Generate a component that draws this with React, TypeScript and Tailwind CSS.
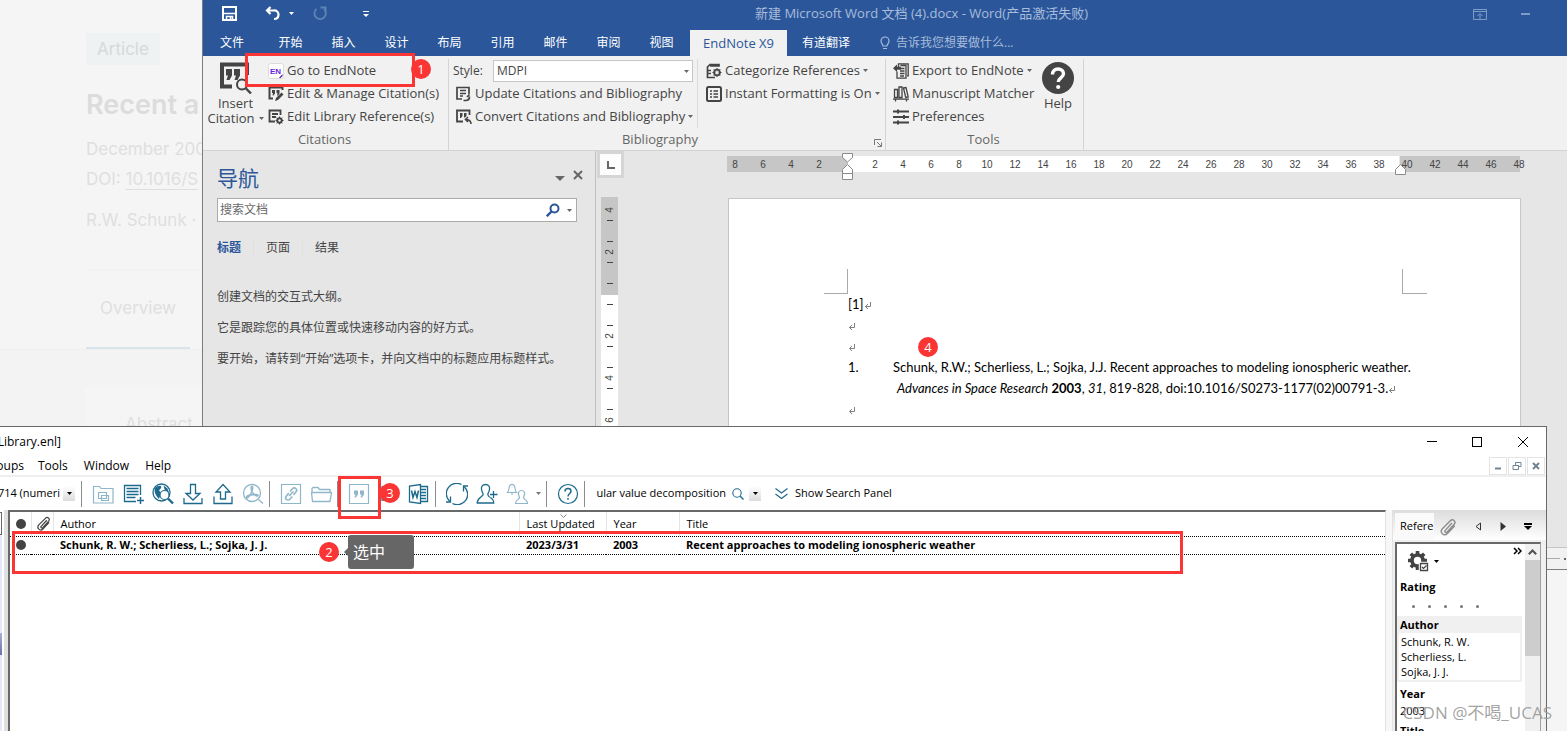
import type { ReactNode } from "react";

const UI = "font-['Open_Sans','Noto_Sans_CJK_SC',sans-serif]";
const DOC = "font-['Lato','Noto_Sans_CJK_SC',sans-serif]";

function Caret({ className = "" }: { className?: string }) {
  return (
    <svg width="5" height="3" viewBox="0 0 5 3" className={`shrink-0 ${className}`} aria-hidden="true">
      <path d="M0 0h5L2.5 3z" fill="currentColor" />
    </svg>
  );
}

function Icon({ size = 16, children, className = "" }: { size?: number; children: ReactNode; className?: string }) {
  return (
    <svg
      width={size}
      height={size}
      viewBox={`0 0 ${size} ${size}`}
      fill="none"
      stroke="currentColor"
      className={`shrink-0 ${className}`}
      aria-hidden="true"
    >
      {children}
    </svg>
  );
}

/* ---------- Article page behind the windows ---------- */

function ArticlePage() {
  return (
    <main className="flex h-full w-[202px] flex-col overflow-hidden bg-[#f5f5f5] font-['Inter',sans-serif] text-[17px] whitespace-nowrap text-[#dfdfdf]">
      <div className="ml-[86px] pt-[33px]">
        <span className="inline-block h-8 w-[74px] bg-[#eef2f3] text-center leading-8 text-[#d6d9da]">Article</span>
        <h1 className="mt-[20px] text-[27px] leading-[40px] font-semibold text-[#dcdcdc]">Recent a</h1>
        <p className="mt-[9px] leading-[30px]">December 200</p>
        <p className="leading-[30px]">
          DOI:{" "}
          <a href="#doi" className="underline underline-offset-4">
            10.1016/S
          </a>
        </p>
        <p className="mt-[11px] leading-[30px]">R.W. Schunk ·</p>
        <div className="mt-[34px] border-t border-[#f0f0f0]">
          <a href="#overview" className="flex h-[79px] w-[104px] items-center justify-center border-b-2 border-[#d9e3ea]">
            Overview
          </a>
        </div>
      </div>
      <div className="grow border-t border-[#efefef] bg-[#f3f3f3] pt-[38px] pl-[85px]">
        <h2 className="h-40 bg-[#f5f5f5] pt-[24px] pl-[40px]">Abstract</h2>
      </div>
    </main>
  );
}

/* ---------- Word ---------- */

function TitleBar() {
  return (
    <header className="flex h-[27px] items-center text-white">
      <button aria-label="保存" className="ml-[19px]">
        <Icon size={15}>
          <path d="M1 1h13v13H1z" strokeWidth="2" />
          <path d="M2 7.500h11M4.500 14v-3.500h6V14M8.500 11v3" strokeWidth="1.500" />
        </Icon>
      </button>
      <button aria-label="撤消" className="ml-[28px]">
        <Icon size={16}>
          <path d="M5.500 1L2 4.500l3.500 3.500M2 4.500h7a4 4 0 0 1 4.500 4c0 3-2 4.500-4.500 4.500" strokeWidth="2.200" />
        </Icon>
      </button>
      <Caret className="ml-[8px]" />
      <button aria-label="重复" className="ml-[19px] text-[#5f82b7]">
        <Icon size={15}>
          <path d="M3.500 3A5.700 5.700 0 1 0 11 3.200M7.500 1.500h5V6.500" strokeWidth="1.800" />
        </Icon>
      </button>
      <button aria-label="自定义" className="ml-[35px]">
        <Icon size={6}>
          <path d="M0 .5h6" />
          <path d="M0 3h6L3 6z" fill="currentColor" stroke="none" />
        </Icon>
      </button>
      <h1 className="ml-[386px] text-[13px] whitespace-nowrap text-[#a9bcdb]">新建 Microsoft Word 文档 (4).docx - Word(产品激活失败)</h1>
      <button aria-label="功能区显示选项" className="ml-auto text-[#7f9bc8]">
        <Icon size={14}>
          <path d="M.5 2.500h13v10H.5zM.5 4.500h13M7 12V7M4.500 9L7 6.500 9.500 9" />
        </Icon>
      </button>
      <button aria-label="最小化" className="mr-[37px] ml-[34px] h-[2px] w-[9px] bg-[#7f9bc8]" />
    </header>
  );
}

const TABS = ["开始", "插入", "设计", "布局", "引用", "邮件", "审阅", "视图"];

function TabStrip() {
  return (
    <nav className="flex h-[29px] items-end text-xs text-white">
      <button className="h-[27px] w-[58px]">文件</button>
      <span className="ml-[3px] flex">
        {TABS.map((t) => (
          <button key={t} className="h-[27px] w-[53px]">
            {t}
          </button>
        ))}
      </span>
      <button className="ml-[2px] h-[26px] w-[97px] bg-[#f1f1f1] text-[13px] leading-[20px] text-[#2b579a]">EndNote X9</button>
      <button className="ml-[4px] h-[27px] w-[70px]">有道翻译</button>
      <button className="ml-[18px] flex h-[26px] items-center gap-[5px] text-[#a9bcdb]">
        <Icon size={14} className="-mx-px">
          <path d="M5 10c0-2-2-2.500-2-5a4 4 0 0 1 8 0c0 2.500-2 3-2 5zM5 12.500h4" strokeWidth="1.200" />
        </Icon>
        告诉我您想要做什么...
      </button>
    </nav>
  );
}

function Cmd({ icon, label, menu }: { icon: ReactNode; label: string; menu?: boolean }) {
  return (
    <button className="flex h-[23px] items-center gap-[3px] whitespace-nowrap">
      {icon}
      {label}
      {menu && <Caret className="text-[#666666]" />}
    </button>
  );
}

function GroupLabel({ children }: { children: ReactNode }) {
  return <div className="h-[22px] pr-[2px] text-center leading-[22px] text-[#666666]">{children}</div>;
}

const iconEndNote = (
  <svg width="16" height="16" viewBox="0 0 16 16" className="shrink-0" aria-hidden="true">
    <rect x=".5" y=".5" width="15" height="15" rx="2" fill="#fff" stroke="#dcdcdc" />
    <text x="2" y="10.500" fontSize="8" fontWeight="700" fontFamily="Liberation Sans, sans-serif" fill="#6a1ee6">
      EN
    </text>
    <path d="M11 15l3.500-4v2l-2 2z" fill="#4a148c" />
  </svg>
);
const iconEditCite = (
  <Icon>
    <path d="M5 12.500H1.500v-11h13V4" strokeWidth="2" />
    <path d="M4 4h3v3.500L5.500 9.500H4.500L5 7H4zM8.500 4h3v3.500L10 9.500H9L9.500 7h-1z" fill="currentColor" stroke="none" />
    <path d="M7 15l1-3 5.500-5.500 2 2L10 14z" fill="currentColor" stroke="none" />
  </Icon>
);
const iconEditLib = (
  <Icon>
    <path d="M7 12.500H1.500v-11h11V6M4 5h6M4 8h4" strokeWidth="1.800" />
    <circle cx="11.500" cy="11.500" r="2.400" strokeWidth="1.600" />
    <path d="M11.500 7.500v8M7.500 11.500h8M8.700 8.700l5.600 5.600M14.300 8.700l-5.600 5.600" strokeWidth="1" />
    <circle cx="11.500" cy="11.500" r="1.200" fill="#f1f1f1" stroke="none" />
  </Icon>
);
const iconUpdate = (
  <Icon>
    <path d="M6 13H1V1.500h12V8M4 4.500h6M4 7.500h6M4 10h3" strokeWidth="1.700" />
    <path d="M7.500 14.500h2c2.500 0 4-1.500 4-4M11 11l2.500-2.500" strokeWidth="1.700" />
  </Icon>
);
const iconConvert = (
  <Icon>
    <path d="M7 12.500H1v-11h12.500V6" strokeWidth="1.800" />
    <path d="M4 4h2.500v3L5 9H4zM8 4h2.500v3L9 8.500H8z" fill="currentColor" stroke="none" />
    <path d="M15 15c0-3-1.500-4.500-5.500-4.500M12 8l-2.500 2.500L12 13" strokeWidth="1.600" />
  </Icon>
);
const iconCategorize = (
  <Icon>
    <path d="M1.500 4.500v10H9M5 3h8V1.500H5zM4.500 1L1 4.500M1.500 7.500H5M1.500 10.500H5" strokeWidth="1.700" />
    <circle cx="11" cy="9.500" r="3" strokeWidth="1.600" />
    <path d="M11 5v9M6.500 9.500h9M7.800 6.300l6.400 6.400M14.200 6.300l-6.400 6.400" strokeWidth="1" />
    <circle cx="11" cy="9.500" r="1.600" fill="#f1f1f1" stroke="none" />
  </Icon>
);
const iconInstant = (
  <Icon>
    <rect x="1" y="1" width="14" height="14" rx="1.500" strokeWidth="2" />
    <path d="M4 5h2M4 8h2M4 11h2M7.500 5H12M7.500 8H12M7.500 11H12" strokeWidth="1.700" />
  </Icon>
);
const iconExport = (
  <Icon>
    <path d="M5.500 5V.8h9.700v12H14M4 8.500v6.700h9V2.500H7.500M8 5.500h3.500M7 8h4.500M7 10.500h4.500M7 13h4" strokeWidth="1.300" />
    <path d="M0 5.200l4-3.700v2.200h4v3H4v2.200z" fill="currentColor" stroke="none" />
  </Icon>
);
const iconBooks = (
  <Icon>
    <path d="M1.500 3.500h3v8h-3zM6 1h3v10.500H6zM10.500 2l2.500-.5 2.200 9.500-2.500.5zM0 13.200h16M2.500 13v2.500M13.500 13v2.500" strokeWidth="1.300" />
  </Icon>
);
const iconPrefs = (
  <Icon>
    <path d="M0 2.500h16M0 8h16M0 13.500h16" strokeWidth="1.800" />
    <path d="M5 .5v4M11 6v4M5 11.500v4" strokeWidth="2" />
  </Icon>
);

function Ribbon() {
  return (
    <section className="flex h-[95px] border-b border-[#d2d2d2] bg-[#f1f1f1] pt-[3px] text-[13px] text-[#444444]">
      <div className="w-[245px]">
        <div className="flex h-[69px]">
          <button className="flex w-[65px] flex-col items-center pt-[3px] leading-[15px]">
            <Icon size={32} className="mb-[2px]">
              <path d="M12 24.500H2v-22h25V13" strokeWidth="4" />
              <path d="M6 7h6v6.500L9.500 18H6.500L8 13.500H6zM14 7h6v6.500L17.500 18h-3L16 13.500h-2z" fill="currentColor" stroke="none" />
              <circle cx="22" cy="22.500" r="5" fill="#f1f1f1" strokeWidth="2" />
              <path d="M26 26.500l5 5" strokeWidth="2.400" />
            </Icon>
            <span>Insert</span>
            <span className="flex items-center gap-[4px]">
              Citation <Caret className="text-[#666666]" />
            </span>
          </button>
          <div>
            <Cmd icon={iconEndNote} label="Go to EndNote" />
            <Cmd icon={iconEditCite} label="Edit & Manage Citation(s)" />
            <Cmd icon={iconEditLib} label="Edit Library Reference(s)" />
          </div>
        </div>
        <GroupLabel>Citations</GroupLabel>
      </div>

      <div className="relative w-[438px] border-x border-[#d4d4d4]">
        <div className="flex h-[69px]">
          <div className="w-[249px] border-r border-[#dcdcdc]">
            <div className="flex h-[23px] items-center pl-[4px]">
              <label htmlFor="style" className="w-[40px] text-xs">
                Style:
              </label>
              <span className="relative flex">
                <select id="style" className="h-[22px] w-[200px] appearance-none border border-[#c6c6c6] bg-white px-[3px] text-xs">
                  <option>MDPI</option>
                </select>
                <Caret className="pointer-events-none absolute top-[10px] right-[4px] text-[#666666]" />
              </span>
            </div>
            <div className="pl-[7px]">
              <Cmd icon={iconUpdate} label="Update Citations and Bibliography" />
              <Cmd icon={iconConvert} label="Convert Citations and Bibliography" menu />
            </div>
          </div>
          <div className="pl-[8px]">
            <Cmd icon={iconCategorize} label="Categorize References" menu />
            <Cmd icon={iconInstant} label="Instant Formatting is On" menu />
          </div>
        </div>
        <div className="pr-[12px]">
          <GroupLabel>Bibliography</GroupLabel>
        </div>
        <button aria-label="Bibliography settings" className="absolute right-[3px] bottom-[3px] text-[#777777]">
          <Icon size={8}>
            <path d="M.5 6V.5H7M3 3l4 4M7.500 3.500v4h-4" />
          </Icon>
        </button>
      </div>

      <div className="w-[198px] border-r border-[#d4d4d4]">
        <div className="flex h-[69px] justify-between pr-[9px] pl-[7px]">
          <div>
            <Cmd icon={iconExport} label="Export to EndNote" menu />
            <Cmd icon={iconBooks} label="Manuscript Matcher" />
            <Cmd icon={iconPrefs} label="Preferences" />
          </div>
          <button className="flex flex-col items-center pt-[3px] leading-[15px]">
            <Icon size={32} className="mb-[2px]">
              <circle cx="16" cy="16" r="16" fill="currentColor" stroke="none" />
              <path d="M10.500 12.500c0-3.500 2.300-5.500 5.500-5.500s5.500 2 5.500 4.800c0 4-5.300 4-5.300 8.200" stroke="#fff" strokeWidth="3.400" />
              <circle cx="16.200" cy="25" r="2.100" fill="#fff" stroke="none" />
            </Icon>
            Help
          </button>
        </div>
        <GroupLabel>Tools</GroupLabel>
      </div>
    </section>
  );
}

function NavPane() {
  return (
    <aside className="w-[393px] border-r border-[#c0c0c0] pr-[18px] pl-[14px] text-xs text-[#444444]">
      <div className="flex items-center pt-[11px]">
        <h2 className="grow text-[21px] leading-[32px] text-[#2b579a]">导航</h2>
        <button aria-label="选项" className="mr-[8px] text-[#666666]">
          <svg width="10" height="5" viewBox="0 0 10 5" aria-hidden="true">
            <path d="M0 0h10L5 5z" fill="currentColor" />
          </svg>
        </button>
        <button aria-label="关闭" className="-mr-[6px] mb-[6px] text-[#666666]">
          <Icon size={10}>
            <path d="M1 1l8 8M9 1L1 9" strokeWidth="2" />
          </Icon>
        </button>
      </div>
      <div className="mt-[4px] flex h-[24px] items-center border border-[#ababab] bg-white pr-[4px]">
        <input aria-label="搜索文档" placeholder="搜索文档" className="min-w-0 grow px-[2px] outline-none placeholder:text-[#6a6a6a]" />
        <Icon size={14} className="text-[#2b579a]">
          <circle cx="8.500" cy="5.500" r="4" strokeWidth="2" />
          <path d="M5.500 8.500L.8 13.200" strokeWidth="2.400" />
        </Icon>
        <Caret className="ml-[7px] text-[#666666]" />
      </div>
      <div className="mt-[16px] flex h-[20px] items-center">
        <button className="w-[36px] text-left font-bold text-[#2b579a]">标题</button>
        <button className="w-[50px] border-x border-[#e0e0e0]">页面</button>
        <button className="w-[48px]">结果</button>
      </div>
      <div className="mt-[23px] flex flex-col whitespace-nowrap">
        <p className="h-[31px] leading-[31px]">创建文档的交互式大纲。</p>
        <p className="h-[31px] leading-[31px]">它是跟踪您的具体位置或快速移动内容的好方式。</p>
        <p className="h-[31px] leading-[31px]">要开始，请转到“开始”选项卡，并向文档中的标题应用标题样式。</p>
      </div>
    </aside>
  );
}

const LEFT_NUMS = [8, 6, 4, 2];
const MID_NUMS = Array.from({ length: 19 }, (_, i) => (i + 1) * 2);
const RIGHT_NUMS = [40, 42, 44, 46, 48];

function RulerNums({ nums }: { nums: number[] }) {
  return (
    <>
      {nums.map((n) => (
        <span key={n} className="w-[28px] shrink-0 text-center">
          {n}
        </span>
      ))}
    </>
  );
}

function HorizontalRuler() {
  return (
    <div className="mt-[5px] ml-[103px] flex h-[16px] font-['Liberation_Sans',sans-serif] text-[10px] leading-[17px] text-[#444444]">
      <div className="flex w-[121px] justify-end bg-[#c6c6c6] pr-[15px]">
        <RulerNums nums={LEFT_NUMS} />
      </div>
      <div className="relative flex w-[551px] bg-white pl-[13px]">
        <RulerNums nums={MID_NUMS} />
        <svg width="12" height="30" viewBox="0 0 12 30" className="absolute top-[-4px] left-[-6px]" fill="#fff" stroke="#8a8a8a" aria-hidden="true">
          <path d="M.5 1.500h10v4l-5 4.500-5-4.500zM.5 21.500v-4l5-5 5 5v4zM.5 21.500h10v6H.5z" />
        </svg>
        <svg width="12" height="12" viewBox="0 0 12 12" className="absolute top-[8px] right-[-8px] z-10" fill="#fff" stroke="#8a8a8a" aria-hidden="true">
          <path d="M.5 10.500v-5l5-5 5 5v5z" />
        </svg>
      </div>
      <div className="ml-px flex w-[120px] bg-[#c6c6c6]">
        <span className="-ml-[7px] flex">
          <RulerNums nums={RIGHT_NUMS} />
        </span>
      </div>
    </div>
  );
}

const VERTICAL_NUMS = ["4", "2", "", "2", "4", "6"];

function VerticalRuler() {
  return (
    <div className="h-full w-[17px] overflow-hidden bg-linear-to-b from-[#c6c6c6] from-[98px] to-white to-[98px] font-['Liberation_Sans',sans-serif] text-[10px] leading-[10px] text-[#444444]">
      <div className="-mt-[8px] flex flex-col">
        {VERTICAL_NUMS.map((n, i) => (
          <div key={i} className="flex h-[42px] flex-col items-center justify-between py-[10px]">
            <i className={i === 0 ? "h-px w-[6px]" : "h-px w-[6px] bg-[#444444]"} />
            <span className="-rotate-90">{n}</span>
            <i className="h-px w-[6px] bg-[#444444]" />
          </div>
        ))}
      </div>
    </div>
  );
}

function ReturnMark() {
  return (
    <svg width="8" height="8" viewBox="0 0 8 8" fill="none" stroke="#808080" className="inline-block" aria-hidden="true">
      <path d="M6.500 0v4.500h-5M4 2L1.500 4.500 4 7" />
    </svg>
  );
}

function DocumentPage() {
  return (
    <article className={`w-[793px] border border-[#c6c6c6] bg-white text-[13px] whitespace-nowrap text-black ${DOC}`}>
      <div className="mt-[70px] flex justify-between pr-[93px] pl-[95px]">
        <i className="h-[25px] w-[24px] border-r border-b border-[#aaaaaa]" />
        <i className="h-[25px] w-[25px] border-b border-l border-[#aaaaaa]" />
      </div>
      <div className="pl-[119px] leading-[21px]">
        <p>
          [1]
          <ReturnMark />
        </p>
        <p>
          <ReturnMark />
        </p>
        <p>
          <ReturnMark />
        </p>
        <div className="flex">
          <span className="w-[45px]">1.</span>
          <p>
            Schunk, R.W.; Scherliess, L.; Sojka, J.J. Recent approaches to modeling ionospheric weather.
            <br />
            <span className="pl-[4px]">
              <em>Advances in Space Research</em> <b>2003</b>, <em>31</em>, 819-828, doi:10.1016/S0273-1177(02)00791-3.
            </span>
            <ReturnMark />
          </p>
        </div>
        <p>
          <ReturnMark />
        </p>
      </div>
    </article>
  );
}

function WordWindow() {
  return (
    <section className={`absolute top-0 right-0 left-[202px] flex h-[570px] flex-col overflow-hidden border-l border-[#7d7d7d] bg-[#e6e6e6] ${UI}`}>
      <div className="bg-[#2b579a]">
        <TitleBar />
        <TabStrip />
      </div>
      <Ribbon />
      <div className="flex h-[396px]">
        <NavPane />
        <div className="flex min-w-0 grow flex-col pl-px">
          <div className="flex">
            <button aria-label="制表符" className="flex h-[27px] w-[27px] items-center justify-center border-[3px] border-[#d5d5d5] bg-[#fdfdfd] text-[#666666]">
              <Icon size={8}>
                <path d="M1 0v7h7" strokeWidth="2" />
              </Icon>
            </button>
            <HorizontalRuler />
          </div>
          <div className="mt-[19px] flex grow pl-[4px]">
            <VerticalRuler />
            <div className="flex pt-px pl-[110px]">
              <DocumentPage />
            </div>
          </div>
        </div>
      </div>
      <footer className="flex grow items-center justify-end border-y border-t-[#c6c6c6] border-b-[#7d7d7d] bg-[#f1f1f1]">
        <i className="h-px w-[20px] bg-[#aaaaaa]" />
        <i className="mr-px ml-[4px] size-[2px] bg-[#666666]" />
      </footer>
    </section>
  );
}

/* ---------- EndNote ---------- */

function ToolButton({ label, children, muted }: { label: string; children: ReactNode; muted?: boolean }) {
  return (
    <button aria-label={label} className={`flex w-[30px] shrink-0 justify-center ${muted ? "text-[#8fb6c9]" : "text-[#1d6a8d]"}`}>
      <Icon size={22}>{children}</Icon>
    </button>
  );
}

function Separator() {
  return <i className="mr-[6px] ml-px h-[26px] w-px shrink-0 bg-[#8c8c8c]" />;
}

function Toolbar() {
  return (
    <div className="flex h-[33px] shrink-0 items-center text-[11px] text-black">
      <div className="flex w-[60px] justify-end overflow-hidden whitespace-nowrap">
        <span>714 (numeri</span>
      </div>
      <button aria-label="Choose output style" className="ml-[3px] flex h-[15px] w-[12px] items-center justify-center bg-linear-to-b from-white to-[#dcdcdc]">
        <Caret />
      </button>
      <i className="mr-[6px] ml-[6px] h-[26px] w-px shrink-0 bg-[#8c8c8c]" />
      <ToolButton label="Groups" muted>
        <path d="M1.500 20V3.500h6l1.500 2h12V20zM6.500 9.500h8v6h-8zM9.500 12.500h7v5h-7z" strokeWidth="1.200" />
      </ToolButton>
      <ToolButton label="New reference">
        <path d="M18.500 12V2.500h-16v16H14" strokeWidth="1.300" />
        <path d="M4.500 5.500h12M4.500 8.500h12M4.500 11.500h12M4.500 14.500h9M18.500 14v7M15 17.500h7" strokeWidth="1.500" />
      </ToolButton>
      <ToolButton label="Online search">
        <circle cx="9.500" cy="9.500" r="8.500" strokeWidth="1.300" />
        <path d="M3 5c2-1.500 4-2.500 6-2 1 2-1 3-2 4.500l2 2c-1 3-1 4-2 6.500C5 14 3 11 2.500 8zM11.500 2.500l4 3 1.500 4-4.500-3z" fill="currentColor" stroke="none" />
        <circle cx="12.500" cy="12" r="4.500" fill="#fff" strokeWidth="1.200" />
        <path d="M16 15.500l5 5" strokeWidth="2.400" />
      </ToolButton>
      <ToolButton label="Import">
        <path d="M8.500 1.500h5v9H18l-7 6.500-7-6.500h4.500zM2 15v5.500h18V15" strokeWidth="1.300" />
      </ToolButton>
      <ToolButton label="Export">
        <path d="M8.500 16v-7H4l7-7.500L18 9h-4.500v7zM2 13.500v7h18v-7" strokeWidth="1.300" />
      </ToolButton>
      <ToolButton label="Find full text" muted>
        <circle cx="10" cy="10" r="8.500" strokeWidth="1.300" />
        <path d="M4.500 14.500c-.5-2 5-3 9.500-3 3 0 2.500 2 .5 1.500C11.500 12 9 8 9 5c0-2 2-2 1.800 0C10.500 9 7 14 5.500 15c-.5.300-1 0-1-.5zM16.500 16.500l4.500 4" strokeWidth="1.400" />
      </ToolButton>
      <Separator />
      <ToolButton label="Open link" muted>
        <path d="M1.500 1.500h19v19h-19z" strokeWidth="1.200" />
        <path d="M9 13l4.500-4.500M10 8.500l2.500-2.700a2.300 2.300 0 0 1 3.600 3L13.500 12M12.300 13.500l-2.500 2.700a2.300 2.300 0 0 1-3.600-3L8.800 10" strokeWidth="1.600" />
      </ToolButton>
      <ToolButton label="Open file" muted>
        <path d="M2 10V5.500l1-1h5l1.500 2H20V10M1.500 9.500h20L20 18.500H2.500z" strokeWidth="1.300" strokeLinejoin="round" />
      </ToolButton>
      <Separator />
      <ToolButton label="Insert citation" muted>
        <path d="M1.500 1.500h19v19h-19z" strokeWidth="1.200" />
        <path d="M6 7.500h4v4L8 14.500H6.500l1-3H6zM12 7.500h4v4l-2 3h-1.500l1-3H12z" fill="currentColor" stroke="none" />
      </ToolButton>
      <ToolButton label="Format bibliography">
        <path d="M4 4h13v13H4zM7 8h8M7 11h8" strokeWidth="1.300" />
      </ToolButton>
      <ToolButton label="Word">
        <path d="M12.500 1.500v19L1.500 19V3zM12.500 3.500h7v15h-7M13 6.500h5M13 9.500h5M13 12.500h5M13 15.500h5" strokeWidth="1.300" />
        <path d="M3.500 7.500l1.500 7 2-6 2 6 1.500-7" strokeWidth="1.500" />
      </ToolButton>
      <Separator />
      <ToolButton label="Sync">
        <path d="M15.500 1.500A10.300 10.300 0 0 0 3.500 18M6.500 20.500A10.300 10.300 0 0 0 18.500 4M17.500 8.500V3H22M4.500 13.500V19H0" strokeWidth="1.300" />
      </ToolButton>
      <ToolButton label="Share library">
        <path d="M9.500 1.500c-3 0-4.500 2-4 5 .3 2 1.200 3.300 1.700 4.500 0 3-6 3.500-6 9h16.500c0-3-1.500-4.500-3.500-5.500M9.500 1.500c3 0 4.500 2 4 5-.3 2-1.200 3.300-1.700 4.500 0 1.500.7 2.500 2 3.300M17.500 8v7M14 11.500h7.500" strokeWidth="1.300" />
      </ToolButton>
      <ToolButton label="Activity feed" muted>
        <path d="M1.500 9.500h9c-2-2-1-6-2.500-7.200a3 3 0 0 0-4 0C2.500 3.500 3.500 7.500 1.500 9.500zM5 11h2" strokeWidth="1.100" />
        <path d="M15.500 7.500c-2.500 0-3.500 2-3 4 .3 1 .8 2 1 3 0 2-4 2-4 6h12c0-4-4-4-4-6 .2-1 .7-2 1-3 .5-2-.5-4-3-4z" strokeWidth="1.200" />
      </ToolButton>
      <span className="flex w-[13px] justify-center text-[#777777]">
        <Caret />
      </span>
      <Separator />
      <ToolButton label="Help">
        <circle cx="11" cy="11" r="9.500" strokeWidth="1.200" />
        <path d="M8 8.500c0-2 1.300-3 3-3s3 1 3 2.700c0 2.300-3 2.300-3 5.300M11 15v1.800" strokeWidth="1.500" />
      </ToolButton>
      <Separator />
      <div className="ml-[4px] flex w-[131px] justify-end overflow-hidden whitespace-nowrap">
        <span>ular value decomposition</span>
      </div>
      <button aria-label="Search" className="ml-[6px] text-[#1d6a8d]">
        <Icon size={12}>
          <circle cx="5" cy="5" r="4.200" strokeWidth="1.100" />
          <path d="M8 8l3.500 3.500" strokeWidth="1.400" />
        </Icon>
      </button>
      <button aria-label="Search options" className="ml-[5px] flex h-[15px] w-[12px] items-center justify-center bg-linear-to-b from-white to-[#dcdcdc]">
        <Caret />
      </button>
      <button className="ml-[14px] flex items-center gap-[7px] whitespace-nowrap">
        <Icon size={13} className="text-[#1d6a8d]">
          <path d="M.5 1.500l6 4.500 6-4.500M.5 7l6 4.500 6-4.500" strokeWidth="1.200" />
        </Icon>
        Show Search Panel
      </button>
    </div>
  );
}

function Paperclip({ size, className }: { size: number; className: string }) {
  return (
    <svg width={size} height={size} viewBox="0 0 16 16" fill="none" stroke="currentColor" strokeWidth="1.300" className={className} aria-hidden="true">
      <path d="M11.500 4.500l-6 6.500c-1 1.200.6 2.600 1.700 1.500l6.300-7c2-2.500-1.300-5.300-3.500-3L3 9.500c-2.800 3.300 1.300 7.300 4.500 4.300l6.500-7" />
    </svg>
  );
}

function ReferenceTable() {
  return (
    <table className="w-full table-fixed border-collapse text-left text-[11px] whitespace-nowrap text-black">
      <colgroup>
        <col className="w-[21px]" />
        <col className="w-[22px]" />
        <col className="w-[466px]" />
        <col className="w-[87px]" />
        <col className="w-[73px]" />
        <col />
      </colgroup>
      <thead>
        <tr className="h-[24px]">
          <th aria-label="Read status" className="border-r border-[#e5e5e5] pl-[6px]">
            <i className="block size-[10px] rounded-full bg-[#444444]" />
          </th>
          <th aria-label="Attachment" className="border-r border-[#e5e5e5] pl-[4px]">
            <Paperclip size={15} className="text-[#444444]" />
          </th>
          <th className="border-r border-[#e5e5e5] pl-[7px] font-normal">Author</th>
          <th className="relative border-r border-[#e5e5e5] pl-[7px] font-normal">
            <svg width="7" height="4" viewBox="0 0 7 4" fill="none" stroke="#888888" className="absolute top-[2px] left-[40px]" aria-hidden="true">
              <path d="M.5.5l3 3 3-3" />
            </svg>
            Last Updated
          </th>
          <th className="border-r border-[#e5e5e5] pl-[7px] font-normal">Year</th>
          <th className="pl-[7px] font-normal">Title</th>
        </tr>
      </thead>
      <tbody>
        <tr className="h-[18px] border-y border-dotted border-black font-bold">
          <td className="pl-[6px]">
            <i className="block size-[10px] rounded-full bg-[#444444]" />
          </td>
          <td />
          <td className="pl-[7px]">Schunk, R. W.; Scherliess, L.; Sojka, J. J.</td>
          <td className="pl-[7px]">2023/3/31</td>
          <td className="pl-[7px]">2003</td>
          <td className="pl-[7px]">Recent approaches to modeling ionospheric weather</td>
        </tr>
      </tbody>
    </table>
  );
}

function ReferencePanel() {
  return (
    <aside className="flex w-[154px] shrink-0 flex-col border-l border-[#e3e3e3] bg-[#f0f0f0] text-[11px] text-black">
      <div className="flex h-[30px] shrink-0 items-end bg-linear-to-b from-[#dcdcdc] to-white pl-[2px]">
        <button className="h-[27px] w-[39px] overflow-hidden bg-[#fafafa] pl-[5px] text-left">Refere</button>
        <span className="flex h-[27px] grow items-center justify-between pr-[14px] pl-[5px]">
          <button aria-label="Attached files" className="text-[#8e8e8e]">
            <Paperclip size={18} className="" />
          </button>
          <button aria-label="Previous">
            <svg width="6" height="9" viewBox="0 0 6 9" fill="none" stroke="#333333" aria-hidden="true">
              <path d="M5.500 1v7L1 4.500z" />
            </svg>
          </button>
          <button aria-label="Next">
            <svg width="6" height="9" viewBox="0 0 6 9" aria-hidden="true">
              <path d="M.5 0v9L6 4.500z" fill="#333333" />
            </svg>
          </button>
          <button aria-label="Panel menu">
            <svg width="8" height="7" viewBox="0 0 8 7" aria-hidden="true">
              <path d="M0 0h8v2H0zM0 3h8L4 7z" fill="#000" />
            </svg>
          </button>
        </span>
      </div>
      <div className="mt-[2px] mr-[5px] ml-[2px] flex min-h-0 grow border-2 border-r border-b-0 border-[#a0a0a0] border-t-[#696969] border-l-[#696969] bg-white">
        <div className="min-w-0 grow pr-[3px]">
          <div className="flex h-[34px] items-center pl-[11px]">
            <button aria-label="Field settings" className="flex items-center gap-[5px]">
              <Icon size={21} className="text-[#444444]">
                <path d="M9.500 0v4M9.500 15v4M0 9.500h4M2.800 2.800l3 3M16.200 2.800l-3 3M2.800 16.200l3-3M15 9.500h4" strokeWidth="3.600" />
                <circle cx="9.500" cy="9.500" r="5.500" strokeWidth="3.600" />
                <path d="M12.500 12.500h7v7h-7z" fill="#fff" stroke="#fff" strokeWidth="3.500" />
                <path d="M12.500 12.500h7v7h-7z" fill="#fff" strokeWidth="1.300" />
                <path d="M14 16l1.500 1.500 3-3" strokeWidth="1.200" />
              </Icon>
              <Caret />
            </button>
            <button aria-label="More" className="mb-[20px] ml-auto">
              <Icon size={9}>
                <path d="M1 1l3 3-3 3M5 1l3 3-3 3" strokeWidth="1.500" />
              </Icon>
            </button>
          </div>
          <h3 className="pl-[3px] leading-[18px] font-bold">Rating</h3>
          <div className="flex h-[20px] items-center gap-[13px] pl-[15px]">
            {[1, 2, 3, 4, 5].map((n) => (
              <i key={n} className="size-[3px] rounded-full bg-[#777777]" />
            ))}
          </div>
          <div className="border-2 border-t-0 border-[#f0f0f0]">
            <h3 className="bg-[#f0f0f0] pl-px leading-[17px] font-bold">Author</h3>
            <p className="py-[1px] pl-[2px] leading-[15px]">
              Schunk, R. W.
              <br />
              Scherliess, L.
              <br />
              Sojka, J. J.
            </p>
          </div>
          <h3 className="mt-[3px] pl-[3px] leading-[18px] font-bold">Year</h3>
          <p className="pl-[3px] leading-[16px]">2003</p>
          <h3 className="mt-[3px] pl-[3px] leading-[18px] font-bold">Title</h3>
        </div>
        <div className="flex w-[15px] shrink-0 flex-col items-center bg-[#f0f0f0] pt-[5px]">
          <svg width="9" height="6" viewBox="0 0 9 6" fill="none" stroke="#505050" strokeWidth="2" aria-hidden="true">
            <path d="M.8 5.200L4.500 1.500l3.700 3.700" />
          </svg>
          <i className="mt-[5px] h-[96px] w-full bg-[#cdcdcd]" />
        </div>
      </div>
    </aside>
  );
}

function EndNoteWindow() {
  return (
    <section className={`absolute top-[426px] right-[20px] bottom-0 left-0 flex flex-col overflow-hidden border-t border-r border-[#696969] bg-white ${UI}`}>
      <header className="flex h-[29px] shrink-0 items-center text-xs text-black">
        <div className="flex w-[61px] justify-end overflow-hidden whitespace-nowrap">
          <span>Library.enl]</span>
        </div>
        <button aria-label="Minimize" className="ml-auto h-px w-[10px] bg-black" />
        <button aria-label="Maximize" className="ml-[35px] size-[10px] border border-black" />
        <button aria-label="Close" className="mr-[18px] ml-[36px]">
          <Icon size={10}>
            <path d="M0 0l10 10M10 0L0 10" />
          </Icon>
        </button>
      </header>
      <nav className="flex h-[21px] shrink-0 items-center border-b-2 border-[#f0f0f0] text-xs text-black">
        <div className="flex w-[24px] justify-end overflow-hidden">
          <button>oups</button>
        </div>
        <span className="ml-[14px] flex gap-[16px]">
          <button>Tools</button>
          <button>Window</button>
          <button>Help</button>
        </span>
        <span className="mr-px ml-auto flex gap-px text-[#708494]">
          <button aria-label="Minimize document" className="flex size-[18px] items-center justify-center border border-[#e3e3e3]">
            <Icon size={10}>
              <path d="M2 7.500h6" strokeWidth="2" />
            </Icon>
          </button>
          <button aria-label="Restore document" className="flex size-[18px] items-center justify-center border border-[#e3e3e3]">
            <Icon size={10}>
              <path d="M1 4.500h5.500v4H1zM3.500 4V1.500H9v4H7M1 4.500h6M3.500 1.500H9" />
            </Icon>
          </button>
          <button aria-label="Close document" className="flex size-[18px] items-center justify-center border border-[#e3e3e3]">
            <Icon size={10}>
              <path d="M2 2l6 6M8 2L2 8" strokeWidth="2" />
            </Icon>
          </button>
        </span>
      </nav>
      <Toolbar />
      <div className="flex min-h-0 grow">
        <div className="flex w-[8px] shrink-0 border-r-4 border-[#dfdfdf] bg-white pt-[2px]">
          <div className="flex w-[2px] flex-col bg-[#e6e9fa]">
            <i className="h-[23px] border-y border-r border-[#696969] bg-white" />
            <i className="mt-[98px] h-[22px] bg-linear-to-b from-[#a9b0d8] to-[#6a74ac]" />
          </div>
        </div>
        <div className="min-w-0 grow border-t-2 border-r border-l-2 border-[#696969] border-r-[#e3e3e3]">
          <ReferenceTable />
        </div>
        <div className="w-[6px] shrink-0 bg-[#f7f7f7]" />
        <ReferencePanel />
      </div>
    </section>
  );
}

/* ---------- Step markers ---------- */

function Badge({ n, className }: { n: number; className: string }) {
  return (
    <span className={`absolute flex size-[20px] items-center justify-center rounded-full bg-[#fa3534] text-[13px] leading-none text-white ${className}`}>
      {n}
    </span>
  );
}

export default function App() {
  return (
    <div className="relative h-screen overflow-hidden bg-[#f5f5f5]">
      <ArticlePage />
      <WordWindow />
      <EndNoteWindow />
      <div className={UI}>
        <i className="absolute top-[53px] left-[245px] h-[34px] w-[170px] border-[3px] border-[#fa3534]" />
        <i className="absolute top-[476px] left-[338px] h-[43px] w-[43px] border-[3px] border-[#fa3534]" />
        <i className="absolute top-[531px] left-[12px] h-[43px] w-[1171px] border-[3px] border-[#fa3534]" />
        <Badge n={1} className="top-[59px] left-[411px]" />
        <Badge n={2} className="top-[542px] left-[319px]" />
        <Badge n={3} className="top-[483px] left-[380px]" />
        <Badge n={4} className="top-[337px] left-[918px]" />
        <div className="absolute top-[535px] left-[344px] flex items-center">
          <i className="border-y-[4px] border-r-[4px] border-y-transparent border-r-[#666666]" />
          <span className="h-[34px] w-[66px] rounded-[3px] bg-[#666666] pl-[5px] text-base leading-[34px] text-white">选中</span>
        </div>
        <span className="absolute right-[15px] bottom-[6px] text-[17px] leading-[24px] whitespace-nowrap text-[#999999]/90">CSDN @不喝_UCAS</span>
      </div>
    </div>
  );
}
